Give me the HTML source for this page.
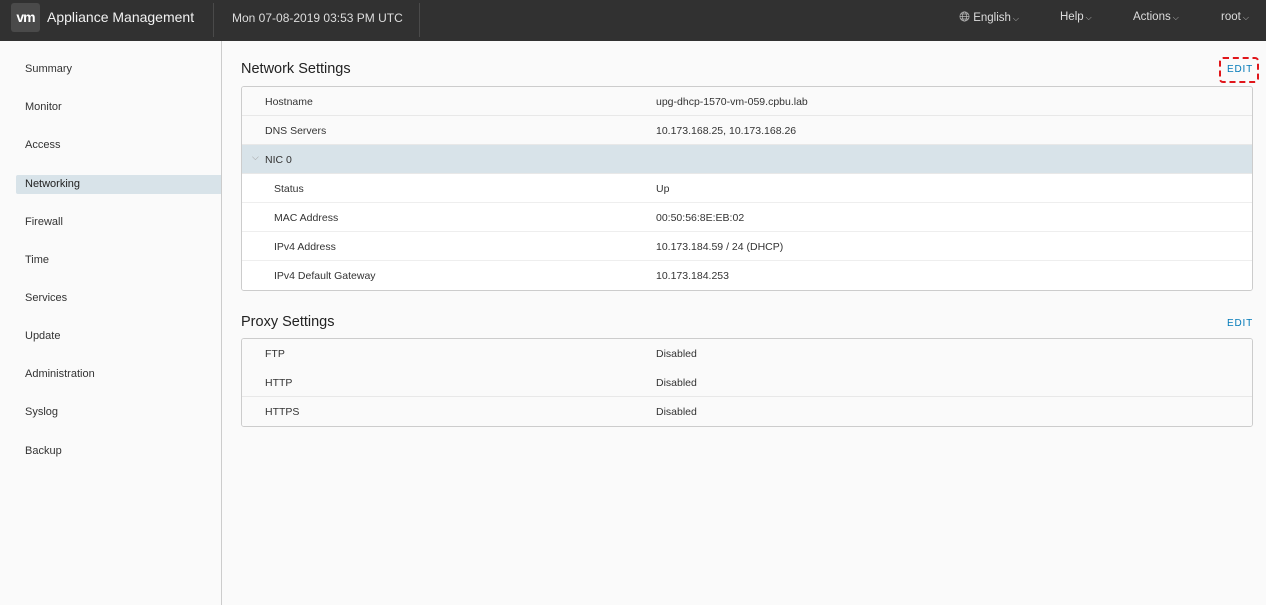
<!DOCTYPE html>
<html><head><meta charset="utf-8"><style>
*{box-sizing:border-box;margin:0;padding:0}
body{width:1266px;height:605px;overflow:hidden;background:#fafafa;font-family:"Liberation Sans",sans-serif;color:#333;position:relative}
.hdr{position:absolute;left:0;top:0;width:1266px;height:41px;background:#313131;color:#fff}
.logo{position:absolute;left:11px;top:3px;width:29px;height:29px;background:#4a4a4a;border-radius:3px;color:#fff;font-weight:bold;font-size:14px;line-height:29px;text-align:center;letter-spacing:-1px}
.title{position:absolute;left:47px;top:9px;font-size:14px;color:#f2f2f2}
.sep{position:absolute;top:3px;width:1px;height:34px;background:#4a4a4a}
.date{position:absolute;left:232px;top:11px;font-size:12px;color:#ddd}
.menu{position:absolute;top:11px;font-size:11.5px;color:#ddd}
.menu small{font-size:8px;color:#bbb;margin-left:2px}
.side{position:absolute;left:0;top:41px;width:222px;height:564px;border-right:1px solid #ccc;background:#fafafa}
.side div{position:absolute;left:25px;font-size:11px;color:#333}
.sel{position:absolute;left:16px;top:175px;width:205px;height:19px;background:#d8e3e9;border-radius:2px 0 0 2px}
h2{position:absolute;left:241px;font-size:14.5px;font-weight:normal;color:#222}
.edit{position:absolute;font-size:10px;color:#0079b8;letter-spacing:.8px}
.tbl{position:absolute;left:241px;width:1012px;border:1px solid #ccc;border-radius:3px;background:#fff;overflow:hidden}
.r{position:relative;height:29px;border-bottom:1px solid #e8e8e8;font-size:10.5px;background:#fafafa}
.r:last-child{border-bottom:none}
.r span{position:absolute;top:9px}
.r .k{left:23px}.r .k2{left:32px}.r .v{left:414px}
.w{background:#fff;border-bottom:1px solid #eee}
.nic{background:#d8e3e9}
</style></head><body>
<div class="hdr">
<div class="logo">vm</div>
<div class="title">Appliance Management</div>
<div class="sep" style="left:213px"></div>
<div class="date">Mon 07-08-2019 03:53 PM UTC</div>
<div class="sep" style="left:419px"></div>
<div class="menu" style="left:959px"><svg width="11" height="11" viewBox="0 0 12 12" style="vertical-align:-1px" fill="none" stroke="#bbb" stroke-width=".8"><circle cx="6" cy="6" r="5"/><ellipse cx="6" cy="6" rx="2.3" ry="5"/><path d="M1 6h10M2 3.3h8M2 8.7h8"/></svg> English<small>⌵</small></div>
<div class="menu" style="left:1060px">Help<small>⌵</small></div>
<div class="menu" style="left:1133px">Actions<small>⌵</small></div>
<div class="menu" style="left:1221px">root<small>⌵</small></div>
</div>
<div class="side">
<div style="top:22px">Summary</div>
<div style="top:60px">Monitor</div>
<div style="top:98px">Access</div>
<div style="top:175px">Firewall</div>
<div style="top:213px">Time</div>
<div style="top:251px">Services</div>
<div style="top:289px">Update</div>
<div style="top:327px">Administration</div>
<div style="top:365px">Syslog</div>
<div style="top:404px">Backup</div>
</div>
<div class="sel"></div>
<div style="position:absolute;left:25px;top:178px;font-size:11px;color:#222">Networking</div>
<h2 style="top:61px">Network Settings</h2>
<div style="position:absolute;left:1219px;top:57px;width:40px;height:26px;border:2.5px dashed #e0161b;border-radius:4px"></div>
<div class="edit" style="left:1227px;top:64px">EDIT</div>
<div class="tbl" style="top:86px">
<div class="r"><span class="k">Hostname</span><span class="v">upg-dhcp-1570-vm-059.cpbu.lab</span></div>
<div class="r"><span class="k">DNS Servers</span><span class="v">10.173.168.25, 10.173.168.26</span></div>
<div class="r nic"><span style="left:10px;top:7px;font-size:9px;color:#999">⌵</span><span class="k">NIC 0</span></div>
<div class="r w"><span class="k2">Status</span><span class="v">Up</span></div>
<div class="r w"><span class="k2">MAC Address</span><span class="v">00:50:56:8E:EB:02</span></div>
<div class="r w"><span class="k2">IPv4 Address</span><span class="v">10.173.184.59 / 24 (DHCP)</span></div>
<div class="r w"><span class="k2">IPv4 Default Gateway</span><span class="v">10.173.184.253</span></div>
</div>
<h2 style="top:314px">Proxy Settings</h2>
<div class="edit" style="left:1227px;top:318px">EDIT</div>
<div class="tbl" style="top:338px">
<div class="r" style="border-bottom:none"><span class="k">FTP</span><span class="v">Disabled</span></div>
<div class="r"><span class="k">HTTP</span><span class="v">Disabled</span></div>
<div class="r"><span class="k">HTTPS</span><span class="v">Disabled</span></div>
</div>
</body></html>
